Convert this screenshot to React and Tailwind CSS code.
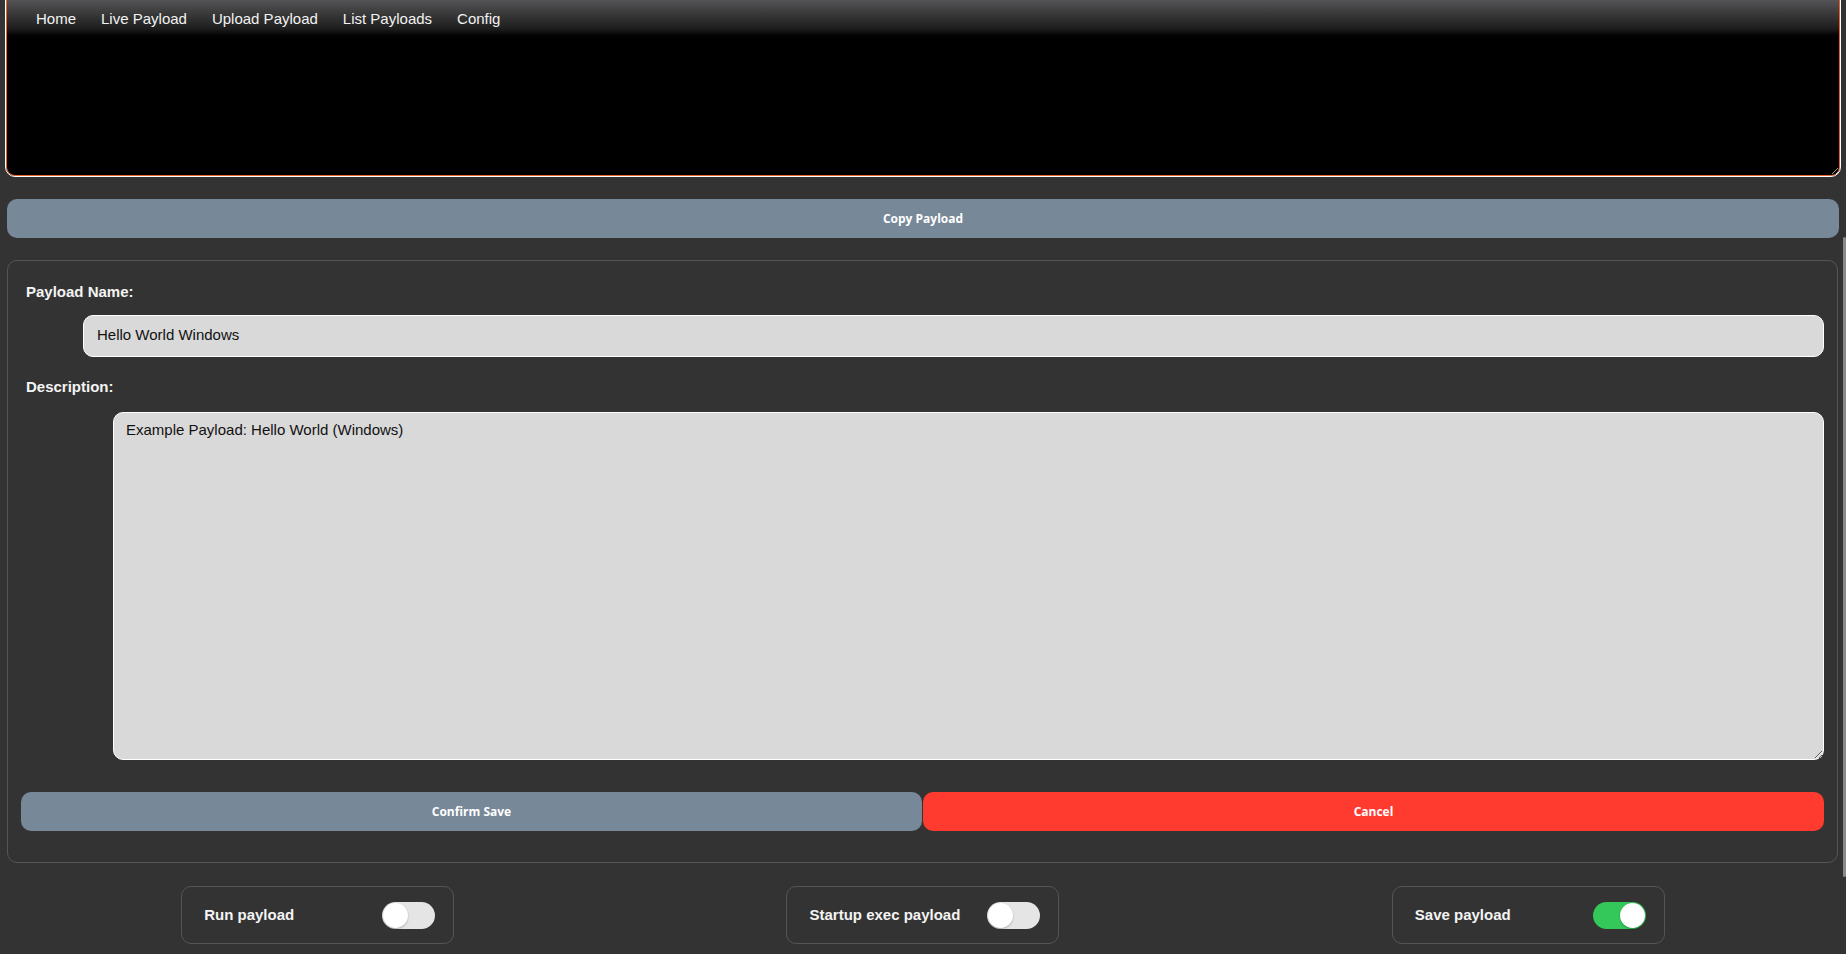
import React, { useState } from 'react';

const navItems = ['Home', 'Live Payload', 'Upload Payload', 'List Payloads', 'Config'];

const Toggle = ({ on, onChange }) => (
    <button
        type="button"
        onClick={onChange}
        className={`relative w-[53px] h-[27px] rounded-full transition-colors duration-200 ${on ? 'bg-[#34c759]' : 'bg-[#e5e5e5]'}`}
    >
        <span
            className={`absolute top-[1px] w-[25px] h-[25px] rounded-full bg-white shadow-[0_1px_2px_rgba(0,0,0,0.25)] transition-all duration-200 ${on ? 'left-[27px]' : 'left-[1px]'}`}
        />
    </button>
);

const SwitchBox = ({ label, on, onChange }) => (
    <div className="w-[273px] h-[58px] border border-[#555555] rounded-[10px] flex items-center justify-between pl-[22px] pr-[18px]">
        <span className="text-[15px] font-bold text-[#f4f4f4]">{label}</span>
        <Toggle on={on} onChange={onChange} />
    </div>
);

const App = () => {
    const [name, setName] = useState('Hello World Windows');
    const [description, setDescription] = useState('Example Payload: Hello World (Windows)');
    const [runPayload, setRunPayload] = useState(false);
    const [startupExec, setStartupExec] = useState(false);
    const [savePayload, setSavePayload] = useState(true);

    const btnFont = { fontFamily: '"Open Sans", "DejaVu Sans", sans-serif' };

    return (
        <div
            className="relative min-h-screen bg-[#333333] overflow-hidden"
            style={{ fontFamily: '"Liberation Sans", Arial, sans-serif' }}
        >
            <div className="relative mx-[6px]">
                <textarea
                    readOnly
                    className="block w-full h-[176px] bg-black text-white border border-t-0 border-[#e8602c] rounded-t-none rounded-b-[9px] outline outline-1 outline-white"
                />
                <nav className="absolute top-0 left-[1px] right-[1px] h-[41px] bg-linear-to-b from-[#545456] via-[#1e1e1e] via-70% to-black flex items-center pl-[29px] pb-[5px] gap-[25px]">
                    {navItems.map((item) => (
                        <a key={item} href="#" className="text-[15px] text-[#f2f2f2] leading-[17px]">
                            {item}
                        </a>
                    ))}
                </nav>
            </div>

            <button
                type="button"
                className="block mt-[23px] ml-[7px] mr-[7px] w-[calc(100%-14px)] h-[39px] rounded-[10px] bg-[#778899] text-white text-[12px] font-bold"
                style={btnFont}
            >
                Copy Payload
            </button>

            <div className="mt-[22px] ml-[7px] mr-[8px] border border-[#555555] rounded-[10px] px-[13px] pt-[22px] pb-[31px]">
                <label className="block ml-[5px] text-[15px] leading-[17px] font-bold text-[#f4f4f4]">Payload Name:</label>
                <input
                    type="text"
                    value={name}
                    onChange={(e) => setName(e.target.value)}
                    className="block mt-[15px] ml-[62px] w-[calc(100%-62px)] h-[42px] bg-[#d9d9d9] border border-white rounded-[10px] px-[13px] pb-[3px] text-[15px] text-[#111111] outline-none"
                />
                <label className="block mt-[21px] ml-[5px] text-[15px] leading-[17px] font-bold text-[#f4f4f4]">Description:</label>
                <textarea
                    value={description}
                    onChange={(e) => setDescription(e.target.value)}
                    className="block mt-[17px] ml-[92px] w-[calc(100%-92px)] h-[348px] bg-[#d9d9d9] border border-white rounded-[10px] px-[12px] pt-[8px] text-[15px] leading-[18px] text-[#111111] outline-none"
                />
                <div className="mt-[32px] grid grid-cols-2 gap-px">
                    <button
                        type="button"
                        className="h-[39px] rounded-[10px] bg-[#778899] text-white text-[12px] font-bold"
                        style={btnFont}
                    >
                        Confirm Save
                    </button>
                    <button
                        type="button"
                        className="h-[39px] rounded-[10px] bg-[#ff3b30] text-white text-[12px] font-bold"
                        style={btnFont}
                    >
                        Cancel
                    </button>
                </div>
            </div>

            <div className="mt-[23px] px-[15px] grid grid-cols-3 justify-items-center">
                <SwitchBox label="Run payload" on={runPayload} onChange={() => setRunPayload(!runPayload)} />
                <SwitchBox label="Startup exec payload" on={startupExec} onChange={() => setStartupExec(!startupExec)} />
                <SwitchBox label="Save payload" on={savePayload} onChange={() => setSavePayload(!savePayload)} />
            </div>

            <div className="absolute right-0 top-[237px] w-[3px] h-[640px] bg-[#8a8a8a] rounded-full" />
        </div>
    );
};

export default App;
